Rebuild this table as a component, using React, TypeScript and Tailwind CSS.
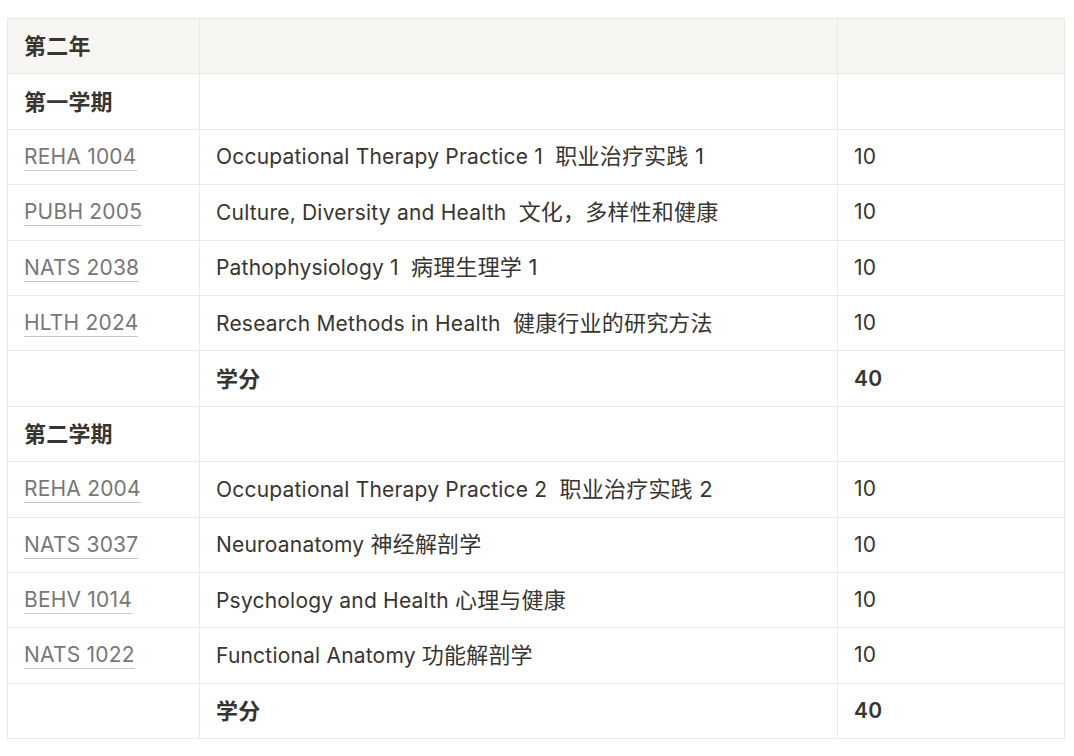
const font = { fontFamily: 'Inter, "Noto Sans CJK SC", sans-serif' }

type Row =
  | { kind: 'head'; label: string; top?: boolean }
  | { kind: 'course'; code: string; en: string; zh: string; credit: string }
  | { kind: 'total'; credit: string }

const rows: Row[] = [
  { kind: 'head', label: '第二年', top: true },
  { kind: 'head', label: '第一学期' },
  { kind: 'course', code: 'REHA 1004', en: 'Occupational Therapy Practice 1  ', zh: '职业治疗实践 1', credit: '10' },
  { kind: 'course', code: 'PUBH 2005', en: 'Culture, Diversity and Health  ', zh: '文化，多样性和健康', credit: '10' },
  { kind: 'course', code: 'NATS 2038', en: 'Pathophysiology 1  ', zh: '病理生理学 1', credit: '10' },
  { kind: 'course', code: 'HLTH 2024', en: 'Research Methods in Health  ', zh: '健康行业的研究方法', credit: '10' },
  { kind: 'total', credit: '40' },
  { kind: 'head', label: '第二学期' },
  { kind: 'course', code: 'REHA 2004', en: 'Occupational Therapy Practice 2  ', zh: '职业治疗实践 2', credit: '10' },
  { kind: 'course', code: 'NATS 3037', en: 'Neuroanatomy ', zh: '神经解剖学', credit: '10' },
  { kind: 'course', code: 'BEHV 1014', en: 'Psychology and Health ', zh: '心理与健康', credit: '10' },
  { kind: 'course', code: 'NATS 1022', en: 'Functional Anatomy ', zh: '功能解剖学', credit: '10' },
  { kind: 'total', credit: '40' },
]

const cell = 'border border-[#e9e9e7] px-4 align-middle whitespace-pre'

export default function App() {
  return (
    <div className="min-h-screen bg-white pl-[7px] pt-[18px] text-[#37352f]" style={font}>
      <table className="border-collapse table-fixed w-[1057px] text-[21px] leading-[28px] tracking-[0.2px]">
        <colgroup>
          <col className="w-[192px]" />
          <col className="w-[638px]" />
          <col className="w-[227px]" />
        </colgroup>
        <tbody>
          {rows.map((r, i) => {
            if (r.kind === 'head') {
              return (
                <tr key={i} className={`h-[55.4px] ${r.top ? 'bg-[#f7f6f3]' : ''}`}>
                  <td className={`${cell} font-semibold text-[22px]`}>{r.label}</td>
                  <td className={cell}></td>
                  <td className={cell}></td>
                </tr>
              )
            }
            if (r.kind === 'total') {
              return (
                <tr key={i} className="h-[55.4px]">
                  <td className={cell}></td>
                  <td className={`${cell} font-semibold text-[22px]`}>学分</td>
                  <td className={`${cell} font-semibold`}>{r.credit}</td>
                </tr>
              )
            }
            return (
              <tr key={i} className="h-[55.4px]">
                <td className={cell}>
                  <span className="text-[#787774] border-b border-[#c8c7c4] pb-[1px]">{r.code}</span>
                </td>
                <td className={cell}>
                  {r.en}
                  <span className="text-[22px]">{r.zh}</span>
                </td>
                <td className={cell}>{r.credit}</td>
              </tr>
            )
          })}
        </tbody>
      </table>
    </div>
  )
}
